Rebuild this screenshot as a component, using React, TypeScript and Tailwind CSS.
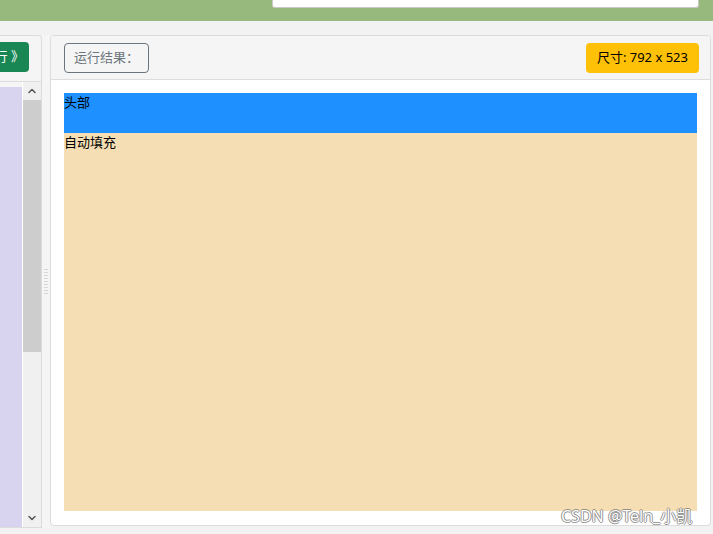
import { ChevronDown, ChevronUp } from "lucide-react";

const FONT = { fontFamily: '"Noto Sans", "Noto Sans CJK SC", sans-serif' };

function Grip() {
  return (
    <div className="flex flex-col items-center gap-[2px]">
      {Array.from({ length: 9 }).map((_, i) => (
        <span key={i} className="w-[4px] h-[1px] bg-[#d6d6d6]" />
      ))}
    </div>
  );
}

export default function App() {
  return (
    <div
      className="relative w-[713px] h-[534px] overflow-hidden bg-[#f2f2f2] flex flex-col"
      style={FONT}
    >
      {/* top bar */}
      <div className="h-[21px] bg-[#98b97d] shrink-0">
        <div className="ml-[272px] w-[427px] h-[8px] bg-white border border-t-0 border-[#c8c8c8] rounded-b-[3px]" />
      </div>

      <div className="flex pt-[14px] items-start">
        {/* left editor panel (clipped) */}
        <div className="w-[42px] h-[493px] bg-[#f5f5f5] border border-l-0 border-[#dcdcdc] rounded-tr-[4px] flex flex-col overflow-hidden">
          <div className="h-[46px] border-b border-[#dcdcdc] pt-[6px] flex">
            <div className="w-[29px] h-[30px] bg-[#198754] rounded-r-[4px] flex items-center justify-end pr-[5px] overflow-hidden text-white text-[13px] whitespace-nowrap">
              运行 》
            </div>
          </div>
          <div className="flex flex-1">
            <div className="w-[22px] mt-[5px] bg-[#d8d4f0]" />
            <div className="w-[1px] bg-white" />
            <div className="w-[18px] bg-[#f0f0f0] flex flex-col">
              <div className="h-[18px] flex items-center justify-center">
                <ChevronUp size={12} strokeWidth={3} className="text-[#555]" />
              </div>
              <div className="h-[252px] bg-[#cdcdcd]" />
              <div className="flex-1" />
              <div className="h-[18px] flex items-center justify-center">
                <ChevronDown size={12} strokeWidth={3} className="text-[#555]" />
              </div>
            </div>
          </div>
        </div>

        {/* splitter */}
        <div className="w-[8px] h-[493px] bg-[#f5f5f5] flex items-center justify-center">
          <Grip />
        </div>

        {/* result panel */}
        <div className="w-[661px] h-[491px] bg-white border border-[#dcdcdc] rounded-[4px] flex flex-col overflow-hidden">
          <div className="h-[44px] bg-[#f5f5f5] border-b border-[#dcdcdc] flex items-center justify-between pl-[13px] pr-[11px] shrink-0">
            <div className="h-[30px] px-[9px] border border-[#6c757d] rounded-[4px] flex items-center text-[13px] text-[#6c757d]">
              运行结果：
            </div>
            <div className="h-[30px] px-[11px] bg-[#ffc107] rounded-[4px] flex items-center text-[13px] text-black">
              尺寸: 792 x 523
            </div>
          </div>
          <div className="flex-1 px-[13px] pt-[13px]">
            <div className="h-[40px] bg-[#1e90ff] text-[13px] text-black leading-[18px]">头部</div>
            <div className="h-[378px] bg-[#f5deb3] text-[13px] text-black leading-[18px]">自动填充</div>
          </div>
        </div>
      </div>

      {/* watermark */}
      <div
        className="absolute left-[561px] top-[504px] text-[16px] text-white whitespace-nowrap"
        style={{
          textShadow:
            "1px 0 0 rgba(110,110,110,.7), -1px 0 0 rgba(110,110,110,.7), 0 1px 0 rgba(110,110,110,.7), 0 -1px 0 rgba(110,110,110,.7)",
        }}
      >
        CSDN @Teln_小凯
      </div>
    </div>
  );
}
